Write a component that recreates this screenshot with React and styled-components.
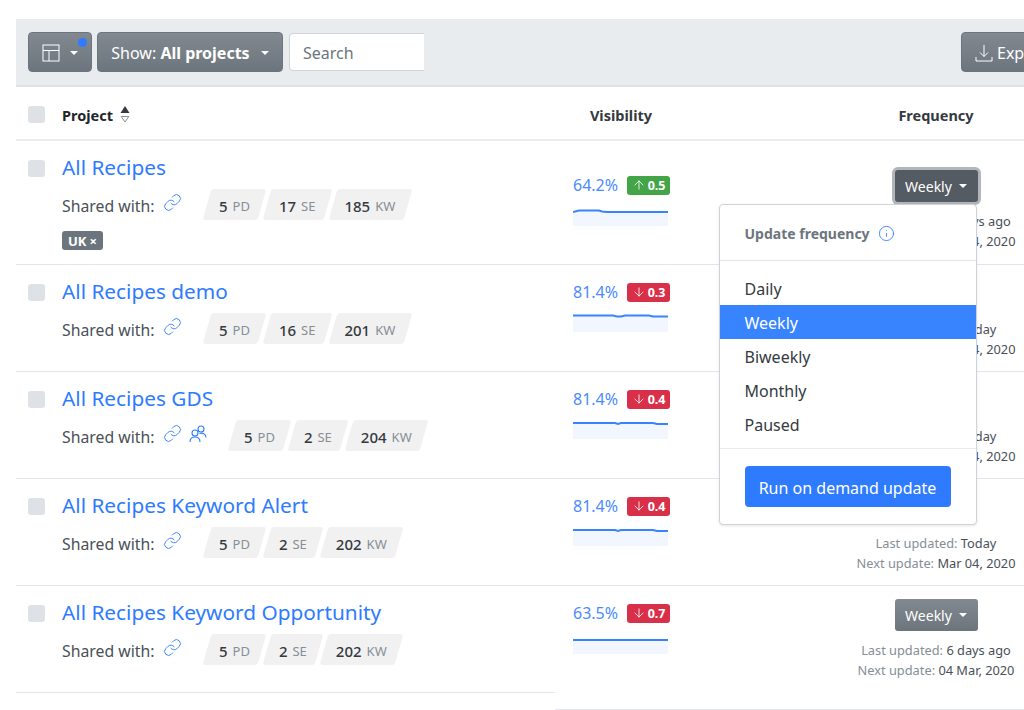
import styled, { createGlobalStyle } from "styled-components";
import { Info, ArrowUp, ArrowDown, Link as LinkIcon } from "lucide-react";

const projects = [
    { name: "All Recipes", pd: 5, se: 17, kw: 185, pct: "64.2%", dir: "up", delta: "0.5", tag: "UK", last: "6 days ago", next: "Mar 04, 2020", line: "M0 5 L4 4 L6 3.5 L26 3.5 L29 4.5 L34 5 L95 5", base: 19, lead: true },
    { name: "All Recipes demo", pd: 5, se: 16, kw: 201, pct: "81.4%", dir: "down", delta: "0.3", last: "Today", next: "Mar 04, 2020", line: "M0 1.5 L40 1.5 L44 2.5 L48 2.5 L52 1.5 L76 1.5 L80 2.5 L95 2.5", base: 18, covered: true },
    { name: "All Recipes GDS", pd: 5, se: 2, kw: 204, pct: "81.4%", dir: "down", delta: "0.4", team: true, last: "Today", next: "Mar 04, 2020", line: "M0 2 L42 2 L45 3 L48 2 L80 2 L84 3 L95 3", base: 18, covered: true },
    { name: "All Recipes Keyword Alert", pd: 5, se: 2, kw: 202, pct: "81.4%", dir: "down", delta: "0.4", last: "Today", next: "Mar 04, 2020", line: "M0 2 L42 2 L45 3 L48 2 L80 2 L84 3 L95 3", base: 18, covered: true },
    { name: "All Recipes Keyword Opportunity", pd: 5, se: 2, kw: 202, pct: "63.5%", dir: "down", delta: "0.7", last: "6 days ago", next: "04 Mar, 2020", line: "M0 5 L95 5", base: 19, final: true }
];

const frequencies = ["Daily", "Weekly", "Biweekly", "Monthly", "Paused"];

function LayoutGlyph(){
    return(
        <svg width="18" height="18" viewBox="0 0 18 18" fill="none" stroke="#fff" strokeWidth="1">
            <rect x="1" y="1" width="16" height="16"/>
            <path d="M1 6.5H17M7 6.5V17"/>
        </svg>
    );
}

function DownloadGlyph(){
    return(
        <svg width="18" height="18" viewBox="0 0 18 18" fill="none" stroke="#fff" strokeWidth="1">
            <path d="M9 1V12.5M5 8.5L9 12.5L13 8.5M1 13V17H17V13"/>
        </svg>
    );
}

function TeamGlyph(){
    return(
        <svg width="18" height="18" viewBox="0 0 18 18" fill="none" stroke="#2e7bff" strokeWidth="1.1">
            <circle cx="6" cy="8" r="3"/>
            <path d="M1 17C1 13.5 3 12 6 12C9 12 11 13.5 11 17"/>
            <circle cx="12" cy="4" r="3"/>
            <path d="M10.5 8.5C13.5 7.5 17 9 17 12.5"/>
        </svg>
    );
}

function SortGlyph(){
    return(
        <svg width="10" height="17" viewBox="0 0 10 17">
            <path d="M5 0L9.5 7H0.5Z" fill="#343a40"/>
            <path d="M1.2 10.5H8.8L5 16Z" fill="none" stroke="#868e96" strokeWidth="1"/>
        </svg>
    );
}

function Trend({ line, base }){
    return(
        <TrendChart width="95" height="19" viewBox="0 0 95 19" fill="none">
            <path d={`${line} L95 ${base} L0 ${base} Z`} fill="#f1f6ff"/>
            <path d={line} stroke="#3884ff" strokeWidth="2"/>
        </TrendChart>
    );
}

function ProjectRow({ project }){
    return(
        <Row>
            <ProjectCell $final={project.final} $tagged={!!project.tag}>
                <Checkbox/>
                <ProjectBody>
                    <Title>{project.name}</Title>
                    <SharedRow>
                        <SharedLabel>Shared with:</SharedLabel>
                        <SharedIcons>
                            <LinkIcon size={19} color="#2e7bff" strokeWidth={1.15}/>
                            {project.team && <TeamGlyph/>}
                        </SharedIcons>
                        <Chips>
                            <Chip>{project.pd}<small>PD</small></Chip>
                            <Chip>{project.se}<small>SE</small></Chip>
                            <Chip>{project.kw}<small>KW</small></Chip>
                        </Chips>
                    </SharedRow>
                    {project.tag && <Tag>{project.tag} <span>×</span></Tag>}
                </ProjectBody>
            </ProjectCell>
            <VisibilityCell $lead={project.lead}>
                <VisibilityTop>
                    {project.pct}
                    <Delta $up={project.dir === "up"}>
                        {project.dir === "up" ? <ArrowUp size={14} strokeWidth={1.4}/> : <ArrowDown size={14} strokeWidth={1.4}/>}
                        {project.delta}
                    </Delta>
                </VisibilityTop>
                <Trend line={project.line} base={project.base}/>
            </VisibilityCell>
            <EmptyCell/>
            <FrequencyCell $lead={project.lead} $final={project.final}>
                <ButtonAnchor>
                    <FrequencyButton $open={project.lead} $covered={project.covered}>Weekly<Caret $gap="7px"/></FrequencyButton>
                    {project.lead && (
                        <Menu>
                            <MenuHeader>Update frequency <Info size={17} color="#2e7bff" strokeWidth={1.2}/></MenuHeader>
                            <MenuList>
                                {frequencies.map(f => <MenuItem key={f} $active={f === "Weekly"}>{f}</MenuItem>)}
                            </MenuList>
                            <MenuFooter>
                                <RunButton>Run on demand update</RunButton>
                            </MenuFooter>
                        </Menu>
                    )}
                </ButtonAnchor>
                <UpdateLine>Last updated: <b>{project.last}</b></UpdateLine>
                <UpdateLine>Next update: <b>{project.next}</b></UpdateLine>
            </FrequencyCell>
        </Row>
    );
}

export default function App(){
    return(
        <>
            <GlobalStyle/>
            <Page>
                <Toolbar>
                    <GreyButton $width="64px">
                        <LayoutGlyph/>
                        <Caret $gap="10px"/>
                        <Dot/>
                    </GreyButton>
                    <GreyButton $width="186px">Show:&nbsp;<strong>All projects</strong><Caret $gap="11px"/></GreyButton>
                    <SearchBox>Search</SearchBox>
                    <ExportButton><DownloadGlyph/>Export</ExportButton>
                </Toolbar>
                <HeadRow>
                    <HeadProject><Checkbox/><b>Project</b><SortGlyph/></HeadProject>
                    <HeadCenter>Visibility</HeadCenter>
                    <span/>
                    <HeadCenter $inset>Frequency</HeadCenter>
                </HeadRow>
                {projects.map(p => <ProjectRow key={p.name} project={p}/>)}
            </Page>
        </>
    );
}

const GlobalStyle = createGlobalStyle`
    html, body{
        margin: 0;
        height: 100%;
        overflow: hidden;
        background: #FFFFFF;
    }
    *{
        box-sizing: border-box;
    }
`;

const Page = styled.div`
    width: 1024px;
    height: 710px;
    padding: 19px 0 0 16px;
    overflow: hidden;
    font-family: "Noto Sans", sans-serif;
    color: #343a40;
`;

const Toolbar = styled.div`
    height: 68px;
    width: 1008px;
    padding: 13px 0 0 12px;
    display: flex;
    align-items: flex-start;
    overflow: hidden;
    background: #e9ecef;
    border-bottom: 2px solid #dee2e6;
`;

const GreyButton = styled.div`
    position: relative;
    flex-shrink: 0;
    width: ${p => p.$width};
    height: 40px;
    margin-right: 5px;
    padding-top: 1px;
    display: flex;
    align-items: center;
    justify-content: center;
    border-radius: 4px;
    font-size: 16px;
    color: #FFFFFF;
    background: linear-gradient(#828990, #6c757d);
    border: 1px solid #6c757d;

    strong{
        font-weight: 700;
    }
`;

const ExportButton = styled(GreyButton)`
    width: 110px;
    margin-left: 537px;
    margin-right: 0;
    justify-content: flex-start;
    padding-left: 13px;
    gap: 4px;
`;

const Caret = styled.i`
    display: inline-block;
    margin-left: ${p => p.$gap};
    border-top: 4.5px solid #FFFFFF;
    border-left: 4.5px solid transparent;
    border-right: 4.5px solid transparent;
`;

const Dot = styled.i`
    position: absolute;
    top: 5px;
    right: 4px;
    width: 9px;
    height: 9px;
    border-radius: 50%;
    background: #2e7bff;
`;

const SearchBox = styled.div`
    flex-shrink: 0;
    width: 135px;
    height: 38px;
    margin: 1px 0 0 1px;
    padding: 1px 0 0 13px;
    display: flex;
    align-items: center;
    font-size: 16px;
    color: #6c757d;
    background: #FFFFFF;
    border: 1px solid #ced4da;
    border-right: none;
    border-radius: 4px 0 0 4px;
`;

const HeadRow = styled.div`
    display: grid;
    grid-template-columns: 539px 132px 169px 168px;
    height: 54px;
    padding-top: 3px;
    align-items: center;
    border-bottom: 2px solid #e9ecef;
    font-size: 14.5px;
`;

const HeadProject = styled.div`
    display: flex;
    align-items: center;
    padding-left: 12px;

    b{
        font-weight: 700;
        color: #212529;
        margin-right: 7px;
    }
`;

const HeadCenter = styled.b`
    padding-right: ${p => p.$inset ? "8px" : "0"};
    text-align: center;
    font-weight: 700;
    color: #343a40;
`;

const Checkbox = styled.div`
    flex-shrink: 0;
    width: 17px;
    height: 17px;
    margin-right: 17px;
    border-radius: 3px;
    background: #dee2e6;
`;

const Row = styled.div`
    display: grid;
    grid-template-columns: 539px 132px 169px 168px;
`;

const ProjectCell = styled.div`
    display: flex;
    align-items: flex-start;
    align-self: ${p => p.$final ? "start" : "stretch"};
    padding: 11px 0 ${p => p.$tagged ? "14px" : "27px"} 12px;
    border-bottom: 1px solid #e3e6ea;

    & > div:first-child{
        margin-top: 8px;
    }
`;

const ProjectBody = styled.div`
    display: flex;
    flex-direction: column;
    align-items: flex-start;
`;

const Title = styled.div`
    font-size: 20.8px;
    line-height: 30px;
    color: #2e7bff;
`;

const SharedRow = styled.div`
    display: flex;
    align-items: center;
    height: 31px;
    margin-top: 7px;
    font-size: 15.8px;
    color: #495057;
`;

const SharedLabel = styled.span`
    padding-top: 2px;
`;

const SharedIcons = styled.div`
    display: flex;
    align-items: center;
    gap: 7px;
    margin: -4px 25px 0 9px;
`;

const Chips = styled.div`
    display: flex;
    gap: 5px;
`;

const Chip = styled.div`
    position: relative;
    z-index: 0;
    height: 31px;
    padding: 2px 12.5px 0 11.5px;
    display: flex;
    align-items: center;
    font-size: 15px;
    font-weight: 500;
    color: #343a40;

    &::before{
        content: "";
        position: absolute;
        z-index: -1;
        inset: 0;
        border-radius: 3px;
        background: #f1f1f1;
        transform: skewX(-16deg);
    }

    small{
        margin-left: 5px;
        font-size: 13px;
        font-weight: 400;
        color: #868e96;
    }
`;

const Tag = styled.div`
    height: 19px;
    margin-top: 11px;
    padding: 0 6px;
    display: flex;
    align-items: center;
    gap: 3px;
    border-radius: 3px;
    font-size: 13px;
    font-weight: 700;
    color: #FFFFFF;
    background: #6c757d;
`;

const VisibilityCell = styled.div`
    padding: ${p => p.$lead ? "32px" : "15px"} 0 0 18px;
    border-bottom: 1px solid #e3e6ea;
`;

const EmptyCell = styled.div`
    border-bottom: 1px solid #e3e6ea;
`;

const VisibilityTop = styled.div`
    display: flex;
    align-items: center;
    gap: 9px;
    height: 24px;
    font-size: 16px;
    color: #4a8bff;
`;

const Delta = styled.span`
    height: 19px;
    width: 43px;
    display: flex;
    align-items: center;
    justify-content: center;
    gap: 2px;
    border-radius: 3px;
    font-size: 12.5px;
    font-weight: 700;
    color: #FFFFFF;
    background: ${p => p.$up ? "#43a547" : "#d9304a"};
`;

const TrendChart = styled.svg`
    display: block;
    margin-top: 10px;
`;

const FrequencyCell = styled.div`
    padding: ${p => p.$lead ? "29px" : "13px"} 8px ${p => p.$final ? "29px" : "12px"} 0;
    display: flex;
    flex-direction: column;
    align-items: center;
    border-bottom: 1px solid #e3e6ea;
`;

const ButtonAnchor = styled.div`
    position: relative;
    margin-bottom: 9px;
`;

const FrequencyButton = styled.div`
    width: 83px;
    height: 32px;
    display: flex;
    align-items: center;
    justify-content: center;
    visibility: ${p => p.$covered ? "hidden" : "visible"};
    border-radius: 3px;
    font-size: 14px;
    color: #FFFFFF;
    background: ${p => p.$open ? "#545b62" : "linear-gradient(#828990, #6c757d)"};
    box-shadow: ${p => p.$open ? "0 0 0 3px #b2b6ba" : "none"};
`;

const UpdateLine = styled.div`
    font-size: 12.8px;
    line-height: 20px;
    color: #868e96;
    white-space: nowrap;

    b{
        font-weight: 400;
        color: #495057;
    }
`;

const Menu = styled.div`
    position: absolute;
    z-index: 5;
    top: 34px;
    right: 1px;
    width: 258px;
    height: 321px;
    background: #FFFFFF;
    border: 1px solid #ced4da;
    border-radius: 4px;
    box-shadow: 0 1px 3px rgba(0, 0, 0, 0.1);
`;

const MenuHeader = styled.div`
    height: 56px;
    padding: 1px 25px 0;
    display: flex;
    align-items: center;
    gap: 8px;
    font-size: 14px;
    font-weight: 700;
    color: #6c757d;
    border-bottom: 1px solid #e3e6ea;
`;

const MenuList = styled.div`
    padding: 10px 0;
    height: 188px;
    border-bottom: 1px solid #e9ecef;
`;

const MenuItem = styled.div`
    height: 34px;
    padding: 2px 25px 0;
    display: flex;
    align-items: center;
    font-size: 16px;
    color: ${p => p.$active ? "#FFFFFF" : "#343a40"};
    background: ${p => p.$active ? "#3884ff" : "transparent"};
`;

const MenuFooter = styled.div`
    padding: 17px 25px;
`;

const RunButton = styled.div`
    width: 206px;
    height: 41px;
    padding-top: 3px;
    display: flex;
    align-items: center;
    justify-content: center;
    border-radius: 4px;
    font-size: 16px;
    color: #FFFFFF;
    background: #2e7bff;
`;
